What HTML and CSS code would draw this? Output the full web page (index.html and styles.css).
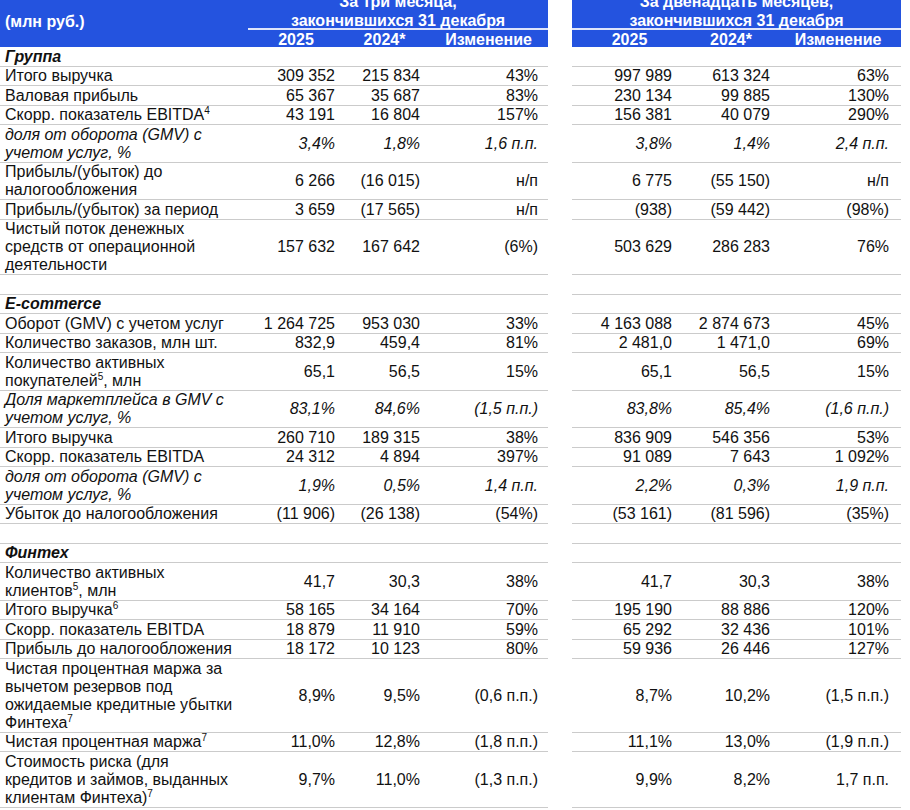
FILE: index.html
```html
<!DOCTYPE html>
<html lang="ru">
<head>
<meta charset="utf-8">
<title>Ключевые показатели</title>
<link rel="stylesheet" href="styles.css">
</head>
<body>
<table class="report">
  <colgroup>
    <col class="c-label"><col class="c-a1"><col class="c-a2"><col class="c-a3"><col class="c-gap"><col class="c-b1"><col class="c-b2"><col class="c-b3">
  </colgroup>
  <thead>
    <tr class="h-period">
      <th class="h-unit" rowspan="2">(млн руб.)</th>
      <th colspan="3">За три месяца,</th>
      <td class="gap"></td>
      <th colspan="3">За двенадцать месяцев,</th>
    </tr>
    <tr class="h-ended">
      <th colspan="3" class="ruled">закончившихся 31 декабря</th>
      <td class="gap"></td>
      <th colspan="3" class="ruled">закончившихся 31 декабря</th>
    </tr>
    <tr class="h-years">
      <th></th><th>2025</th><th>2024*</th><th>Изменение</th><td class="gap"></td><th>2025</th><th>2024*</th><th>Изменение</th>
    </tr>
  </thead>
  <tbody>
    <tr class="sec"><td class="lbl">Группа</td><td></td><td></td><td></td><td class="gap"></td><td></td><td></td><td></td></tr>
    <tr><td class="lbl">Итого выручка</td><td>309 352</td><td>215 834</td><td>43%</td><td class="gap"></td><td>997 989</td><td>613 324</td><td>63%</td></tr>
    <tr><td class="lbl">Валовая прибыль</td><td>65 367</td><td>35 687</td><td>83%</td><td class="gap"></td><td>230 134</td><td>99 885</td><td>130%</td></tr>
    <tr><td class="lbl">Скорр. показатель EBITDA<sup>4</sup></td><td>43 191</td><td>16 804</td><td>157%</td><td class="gap"></td><td>156 381</td><td>40 079</td><td>290%</td></tr>
    <tr class="it"><td class="lbl">доля от оборота (GMV) с<br>учетом услуг, %</td><td>3,4%</td><td>1,8%</td><td>1,6 п.п.</td><td class="gap"></td><td>3,8%</td><td>1,4%</td><td>2,4 п.п.</td></tr>
    <tr><td class="lbl">Прибыль/(убыток) до<br>налогообложения</td><td>6 266</td><td>(16 015)</td><td>н/п</td><td class="gap"></td><td>6 775</td><td>(55 150)</td><td>н/п</td></tr>
    <tr><td class="lbl">Прибыль/(убыток) за период</td><td>3 659</td><td>(17 565)</td><td>н/п</td><td class="gap"></td><td>(938)</td><td>(59 442)</td><td>(98%)</td></tr>
    <tr><td class="lbl">Чистый поток денежных<br>средств от операционной<br>деятельности</td><td>157 632</td><td>167 642</td><td>(6%)</td><td class="gap"></td><td>503 629</td><td>286 283</td><td>76%</td></tr>
    <tr class="blank"><td class="lbl">&nbsp;</td><td></td><td></td><td></td><td class="gap"></td><td></td><td></td><td></td></tr>

    <tr class="sec"><td class="lbl">E-commerce</td><td></td><td></td><td></td><td class="gap"></td><td></td><td></td><td></td></tr>
    <tr><td class="lbl">Оборот (GMV) с учетом услуг</td><td>1 264 725</td><td>953 030</td><td>33%</td><td class="gap"></td><td>4 163 088</td><td>2 874 673</td><td>45%</td></tr>
    <tr><td class="lbl">Количество заказов, млн шт.</td><td>832,9</td><td>459,4</td><td>81%</td><td class="gap"></td><td>2 481,0</td><td>1 471,0</td><td>69%</td></tr>
    <tr><td class="lbl">Количество активных<br>покупателей<sup>5</sup>, млн</td><td>65,1</td><td>56,5</td><td>15%</td><td class="gap"></td><td>65,1</td><td>56,5</td><td>15%</td></tr>
    <tr class="it"><td class="lbl">Доля маркетплейса в GMV с<br>учетом услуг, %</td><td>83,1%</td><td>84,6%</td><td>(1,5 п.п.)</td><td class="gap"></td><td>83,8%</td><td>85,4%</td><td>(1,6 п.п.)</td></tr>
    <tr><td class="lbl">Итого выручка</td><td>260 710</td><td>189 315</td><td>38%</td><td class="gap"></td><td>836 909</td><td>546 356</td><td>53%</td></tr>
    <tr><td class="lbl">Скорр. показатель EBITDA</td><td>24 312</td><td>4 894</td><td>397%</td><td class="gap"></td><td>91 089</td><td>7 643</td><td>1 092%</td></tr>
    <tr class="it"><td class="lbl">доля от оборота (GMV) с<br>учетом услуг, %</td><td>1,9%</td><td>0,5%</td><td>1,4 п.п.</td><td class="gap"></td><td>2,2%</td><td>0,3%</td><td>1,9 п.п.</td></tr>
    <tr><td class="lbl">Убыток до налогообложения</td><td>(11 906)</td><td>(26 138)</td><td>(54%)</td><td class="gap"></td><td>(53 161)</td><td>(81 596)</td><td>(35%)</td></tr>
    <tr class="blank"><td class="lbl">&nbsp;</td><td></td><td></td><td></td><td class="gap"></td><td></td><td></td><td></td></tr>

    <tr class="sec"><td class="lbl">Финтех</td><td></td><td></td><td></td><td class="gap"></td><td></td><td></td><td></td></tr>
    <tr><td class="lbl">Количество активных<br>клиентов<sup>5</sup>, млн</td><td>41,7</td><td>30,3</td><td>38%</td><td class="gap"></td><td>41,7</td><td>30,3</td><td>38%</td></tr>
    <tr><td class="lbl">Итого выручка<sup>6</sup></td><td>58 165</td><td>34 164</td><td>70%</td><td class="gap"></td><td>195 190</td><td>88 886</td><td>120%</td></tr>
    <tr><td class="lbl">Скорр. показатель EBITDA</td><td>18 879</td><td>11 910</td><td>59%</td><td class="gap"></td><td>65 292</td><td>32 436</td><td>101%</td></tr>
    <tr><td class="lbl">Прибыль до налогообложения</td><td>18 172</td><td>10 123</td><td>80%</td><td class="gap"></td><td>59 936</td><td>26 446</td><td>127%</td></tr>
    <tr><td class="lbl">Чистая процентная маржа за<br>вычетом резервов под<br>ожидаемые кредитные убытки<br>Финтеха<sup>7</sup></td><td>8,9%</td><td>9,5%</td><td>(0,6 п.п.)</td><td class="gap"></td><td>8,7%</td><td>10,2%</td><td>(1,5 п.п.)</td></tr>
    <tr><td class="lbl">Чистая процентная маржа<sup>7</sup></td><td>11,0%</td><td>12,8%</td><td>(1,8 п.п.)</td><td class="gap"></td><td>11,1%</td><td>13,0%</td><td>(1,9 п.п.)</td></tr>
    <tr><td class="lbl">Стоимость риска (для<br>кредитов и займов, выданных<br>клиентам Финтеха)<sup>7</sup></td><td>9,7%</td><td>11,0%</td><td>(1,3 п.п.)</td><td class="gap"></td><td>9,9%</td><td>8,2%</td><td>1,7 п.п.</td></tr>
  </tbody>
</table>
</body>
</html>
```
FILE: styles.css
```css
html, body {
  margin: 0;
  padding: 0;
  background: #ffffff;
}

body {
  font-family: "Liberation Sans", Arial, sans-serif;
  font-size: 16px;
  color: #111111;
}

.report {
  border-collapse: separate;
  border-spacing: 0;
  table-layout: fixed;
  width: 901px;
  margin-top: -10px;
}

.c-label { width: 248px; }
.c-a1 { width: 92px; }
.c-a2 { width: 85px; }
.c-a3 { width: 123px; }
.c-gap { width: 24px; }
.c-b1 { width: 115px; }
.c-b2 { width: 88px; }
.c-b3 { width: 126px; }

/* ---------- header ---------- */
.report th {
  background: #2453df;
  color: #ffffff;
  font-weight: bold;
  line-height: 15px;
  padding: 4px 0 0;
  text-align: center;
  white-space: nowrap;
}

.report th.h-unit {
  text-align: left;
  vertical-align: bottom;
  padding: 0 0 1px 5px;
}

.report th.ruled {
  border-bottom: 2px solid #dfe5fb;
}

.h-years th {
  padding-top: 2px;
}

.h-years th:nth-child(2),
.h-years th:nth-child(3),
.h-years th:nth-child(4) {
  padding-left: 4px;
}

.report .gap {
  background: #ffffff;
  border: none;
  padding: 0;
}

/* ---------- body ---------- */
.report tbody td {
  line-height: 18px;
  padding: 0.5px 0 0;
  border-bottom: 1px solid #cbcbcb;
  text-align: right;
  vertical-align: middle;
  white-space: nowrap;
}

.report tbody td.lbl {
  text-align: left;
  padding-left: 5px;
  white-space: normal;
}

.report tbody td:nth-child(2) { padding-right: 5px; }
.report tbody td:nth-child(3) { padding-right: 5px; }
.report tbody td:nth-child(4) { padding-right: 10px; }
.report tbody td:nth-child(6) { padding-right: 15px; }
.report tbody td:nth-child(7) { padding-right: 5px; }
.report tbody td:nth-child(8) { padding-right: 12px; }

.report tbody td.gap {
  border: none;
}

.sec .lbl {
  font-weight: bold;
  font-style: italic;
}

.it td {
  font-style: italic;
}

.report sup {
  font-size: 10px;
  line-height: 0;
  vertical-align: 6px;
}
```
